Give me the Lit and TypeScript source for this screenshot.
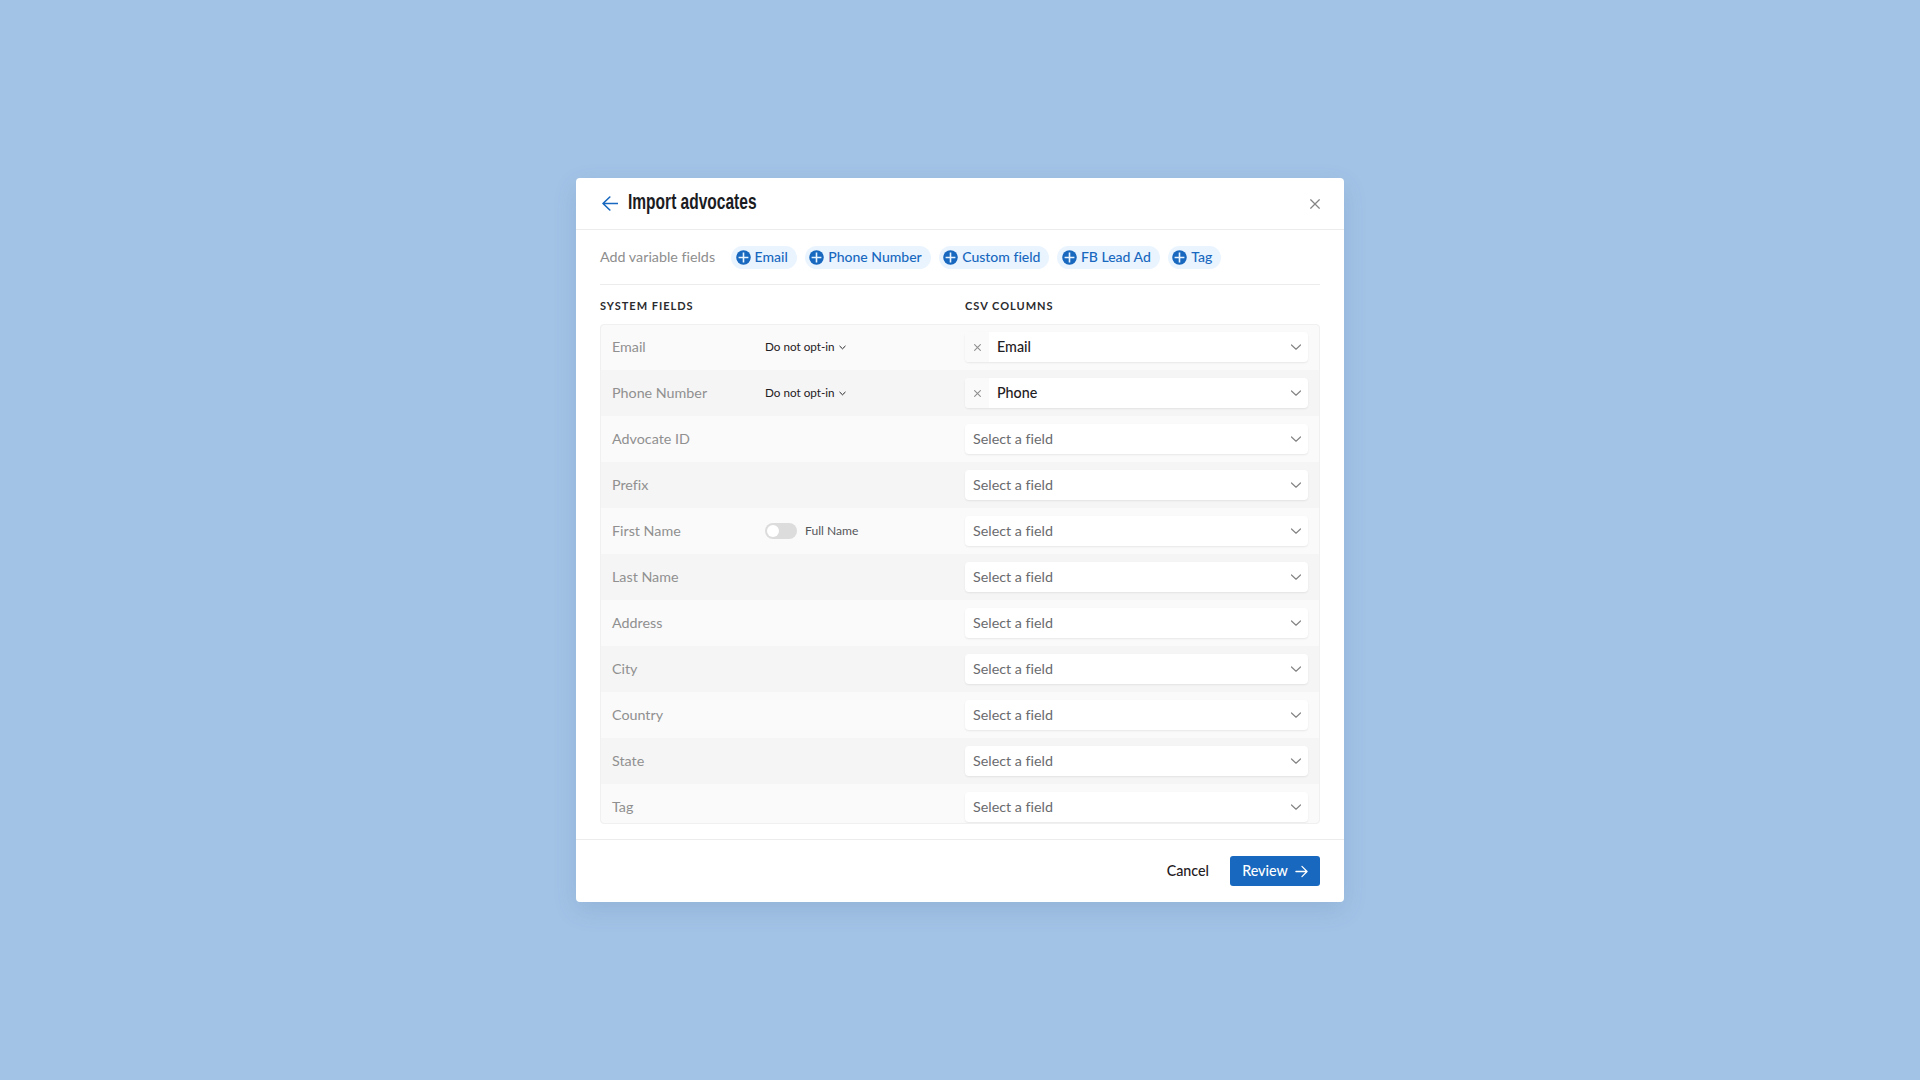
import { LitElement, html, css, svg } from "lit";
import { customElement } from "lit/decorators.js";

const chevron = (cls: string) => html`<svg class=${cls} viewBox="0 0 12 12" fill="none" stroke="currentColor" stroke-width="1.2" stroke-linecap="round" stroke-linejoin="round"><path d="M1.5 4l4.5 4.2L10.5 4"/></svg>`;
const miniChevron = html`<svg class="mini" viewBox="0 0 7 7" fill="none" stroke="currentColor" stroke-width="1" stroke-linecap="round" stroke-linejoin="round"><path d="M.8 2.2l2.7 2.6 2.7-2.6"/></svg>`;
const plus = html`<svg class="plus" viewBox="0 0 15 15"><circle cx="7.5" cy="7.5" r="7.25" fill="#1768BE"/><path d="M7.5 2.6v9.8M2.6 7.5h9.8" stroke="#EAF4FF" stroke-width="1.6" fill="none"/></svg>`;

const rows: { label: string; value?: string; extra?: "opt" | "toggle" }[] = [
  { label: "Email", value: "Email", extra: "opt" },
  { label: "Phone Number", value: "Phone", extra: "opt" },
  { label: "Advocate ID" },
  { label: "Prefix" },
  { label: "First Name", extra: "toggle" },
  { label: "Last Name" },
  { label: "Address" },
  { label: "City" },
  { label: "Country" },
  { label: "State" },
  { label: "Tag" },
];

@customElement("app-root")
export class AppRoot extends LitElement {
  static styles = css`
    :host {
      display: flex;
      align-items: flex-start;
      justify-content: center;
      width: 100%;
      height: 1080px;
      background: #a2c3e6;
      font-family: "Lato", "Open Sans", sans-serif;
      font-variant-ligatures: none;
      color: #1f2023;
      overflow: hidden;
    }
    .modal {
      margin-top: 178px;
      width: 768px;
      height: 724px;
      background: #fff;
      border-radius: 4px;
      box-shadow: 0 8px 24px rgba(60, 90, 130, 0.14);
      display: flex;
      flex-direction: column;
      box-sizing: border-box;
    }
    .t { padding-bottom: 2px; }
    .header {
      height: 52px;
      flex: none;
      box-sizing: border-box;
      border-bottom: 1px solid #ececec;
      padding: 0 24px;
      display: flex;
      align-items: center;
    }
    .back { width: 16px; height: 15px; color: #1768be; margin: 0 10px 0 2px; flex: none; }
    h1 {
      margin: 0;
      padding-bottom: 2px;
      font: 700 22.5px/1 "Liberation Sans", sans-serif;
      color: #1b1c1f;
      flex: 1;
    }
    h1 span { display: inline-block; transform: scaleX(0.69); transform-origin: left center; white-space: nowrap; }
    .close { width: 10px; height: 10px; color: #858585; flex: none; }
    .body { padding: 0 24px; flex: 1; min-height: 0; display: flex; flex-direction: column; }
    .vars {
      height: 55px;
      flex: none;
      box-sizing: border-box;
      border-bottom: 1px solid #ececec;
      display: flex;
      align-items: center;
      font-size: 14.3px;
    }
    .vars .lead { color: #8e8e8e; margin-right: 16px; }
    .pill {
      display: flex;
      align-items: center;
      height: 23px;
      padding: 0 9px 0 4.5px;
      border-radius: 12px;
      background: #eaf4ff;
      color: #1768be;
      margin-right: 8px;
      font-weight: 500;
      font-size: 14px;
    }
    .plus { width: 15px; height: 15px; margin-right: 4px; flex: none; }
    .heads {
      display: flex;
      height: 39px;
      flex: none;
      align-items: center;
      font-size: 11px;
      font-weight: 700;
      letter-spacing: 1px;
      color: #2a2b2e;
      padding-top: 2px;
      box-sizing: border-box;
    }
    .heads .a { width: 365px; }
    .table {
      height: 500px;
      flex: none;
      overflow: hidden;
      outline: 1px solid #f0f0f0;
      outline-offset: -1px;
      border-radius: 4px;
      box-sizing: border-box;
    }
    .row {
      height: 46px;
      display: flex;
      align-items: center;
      padding: 0 12px;
      background: #fafafa;
      font-size: 14.3px;
    }
    .row:nth-child(even) { background: #f5f5f5; }
    .label { width: 153px; color: #909090; flex: none; }
    .mid { width: 200px; flex: none; display: flex; align-items: center; font-size: 11.7px; color: #1f2023; }
    .mini { width: 7px; height: 7px; margin-left: 4px; }
    .track {
      width: 32px;
      height: 16px;
      border-radius: 8px;
      background: #dcdcdc;
      position: relative;
      margin-right: 8px;
      flex: none;
    }
    .knob {
      position: absolute;
      left: 2px;
      top: 2px;
      width: 12px;
      height: 12px;
      border-radius: 50%;
      background: #fff;
    }
    .toggle-label { color: #55565a; font-size: 12.1px; }
    .select {
      width: 343px;
      height: 30px;
      flex: none;
      background: #fff;
      border-radius: 4px;
      box-shadow: 0 1px 2px rgba(0, 0, 0, 0.08);
      display: flex;
      align-items: center;
      box-sizing: border-box;
      overflow: hidden;
    }
    .clear {
      width: 24px;
      height: 100%;
      background: #fafafa;
      display: flex;
      align-items: center;
      justify-content: center;
      color: #8e8e8e;
      flex: none;
    }
    .clear svg { width: 7px; height: 7px; }
    .val { flex: 1; padding-left: 8px; color: #1f2023; font-weight: 500; }
    .ph { flex: 1; padding-left: 8px; color: #6a6b6e; }
    .caret { width: 12px; height: 12px; color: #858585; margin-right: 6px; flex: none; }
    .footer {
      height: 63px;
      flex: none;
      box-sizing: border-box;
      border-top: 1px solid #ececec;
      margin-top: 15px;
      padding: 0 24px;
      display: flex;
      align-items: center;
      justify-content: flex-end;
      font-size: 14.3px;
    }
    .cancel { margin-right: 21px; color: #1f2023; font-weight: 500; }
    .review {
      width: 90px;
      height: 30px;
      background: #1768be;
      border-radius: 3px;
      color: #fff;
      display: flex;
      align-items: center;
      justify-content: center;
      font-weight: 500;
    }
    .review svg { width: 13px; height: 13px; margin-left: 7px; }
  `;

  render() {
    const x = svg`<path d="M.5 .5l11 11M11.5 .5L.5 11.5"/>`;
    return html`<div class="modal">
      <div class="header">
        <svg class="back" viewBox="0 0 16 15" fill="none" stroke="currentColor" stroke-width="1.6" stroke-linecap="round" stroke-linejoin="round"><path d="M1 7.5h14.5M7.8 1L1 7.5 7.8 14"/></svg>
        <h1><span>Import advocates</span></h1>
        <svg class="close" viewBox="0 0 12 12" fill="none" stroke="currentColor" stroke-width="1.5">${x}</svg>
      </div>
      <div class="body">
        <div class="vars">
          <span class="lead t">Add variable fields</span>
          ${["Email", "Phone Number", "Custom field", "FB Lead Ad", "Tag"].map((t) => html`<span class="pill">${plus}<span class="t">${t}</span></span>`)}
        </div>
        <div class="heads"><span class="a">SYSTEM FIELDS</span><span>CSV COLUMNS</span></div>
        <div class="table">
          ${rows.map(
            (r) => html`<div class="row">
              <span class="label t">${r.label}</span>
              <span class="mid">
                ${r.extra === "opt" ? html`<span class="t">Do not opt-in</span>${miniChevron}` : ""}
                ${r.extra === "toggle" ? html`<span class="track"><span class="knob"></span></span><span class="toggle-label t">Full Name</span>` : ""}
              </span>
              <div class="select">
                ${r.value
                  ? html`<span class="clear"><svg viewBox="0 0 12 12" fill="none" stroke="currentColor" stroke-width="1.8">${x}</svg></span><span class="val t">${r.value}</span>`
                  : html`<span class="ph t">Select a field</span>`}
                ${chevron("caret")}
              </div>
            </div>`
          )}
        </div>
      </div>
      <div class="footer">
        <span class="cancel t">Cancel</span>
        <span class="review"><span class="t">Review</span><svg viewBox="0 0 14 14" fill="none" stroke="currentColor" stroke-width="1.4" stroke-linecap="round" stroke-linejoin="round"><path d="M1 7h12M7.5 1.5L13 7l-5.5 5.5"/></svg></span>
      </div>
    </div>`;
  }
}
